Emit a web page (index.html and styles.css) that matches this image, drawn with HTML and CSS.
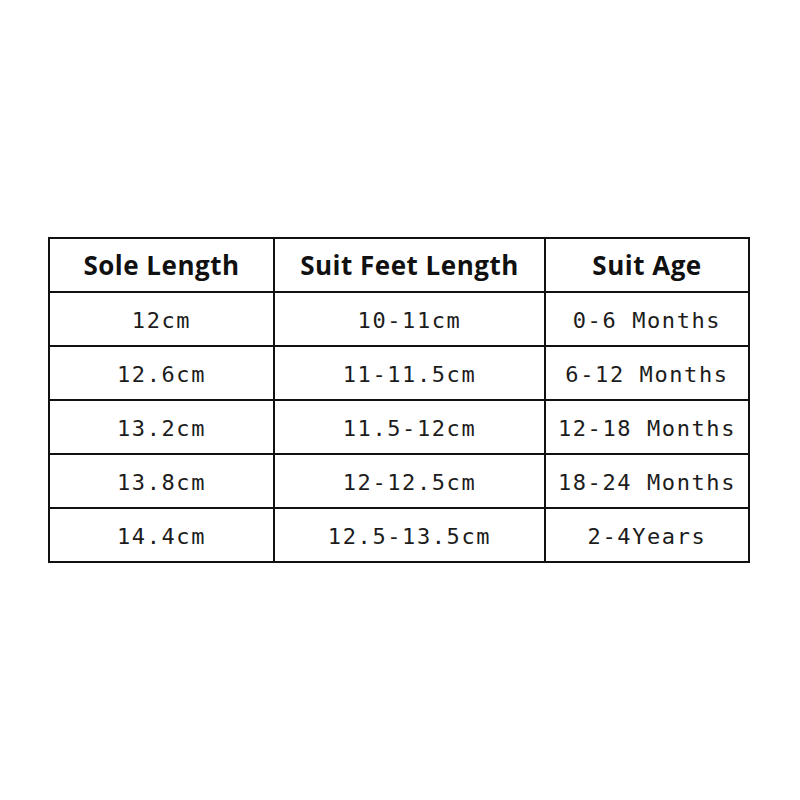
FILE: index.html
```html
<!DOCTYPE html>
<html>
<head>
<meta charset="utf-8">
<link rel="stylesheet" href="styles.css">
</head>
<body>
<div class="table">
  <div class="cell head">Sole Length</div>
  <div class="cell head">Suit Feet Length</div>
  <div class="cell head">Suit Age</div>

  <div class="cell">12cm</div>
  <div class="cell">10-11cm</div>
  <div class="cell">0-6 Months</div>

  <div class="cell">12.6cm</div>
  <div class="cell">11-11.5cm</div>
  <div class="cell">6-12 Months</div>

  <div class="cell">13.2cm</div>
  <div class="cell">11.5-12cm</div>
  <div class="cell">12-18 Months</div>

  <div class="cell">13.8cm</div>
  <div class="cell">12-12.5cm</div>
  <div class="cell">18-24 Months</div>

  <div class="cell">14.4cm</div>
  <div class="cell">12.5-13.5cm</div>
  <div class="cell">2-4Years</div>
</div>
</body>
</html>
```
FILE: styles.css
```css
html, body {
  margin: 0;
  padding: 0;
  background: #ffffff;
}
body {
  padding: 237px 0 0 48px;
  width: 800px;
  height: 800px;
  box-sizing: border-box;
}
.table {
  display: grid;
  grid-template-columns: 223px 269px 202px;
  grid-template-rows: repeat(6, 52px);
  gap: 2px;
  padding: 2px;
  width: 702px;
  box-sizing: border-box;
  background: #111111;
}
.cell {
  background: #ffffff;
  display: flex;
  align-items: center;
  justify-content: center;
  font-family: "DejaVu Sans Mono", "Liberation Mono", monospace;
  font-size: 22px;
  letter-spacing: 1.6px;
  color: #1c1c1c;
  white-space: nowrap;
  padding-top: 3px;
  box-sizing: border-box;
}
.cell.head {
  font-family: "Open Sans", "Noto Sans", sans-serif;
  font-weight: 700;
  font-size: 26px;
  letter-spacing: 0.5px;
  color: #111111;
  padding-top: 0;
}
```
